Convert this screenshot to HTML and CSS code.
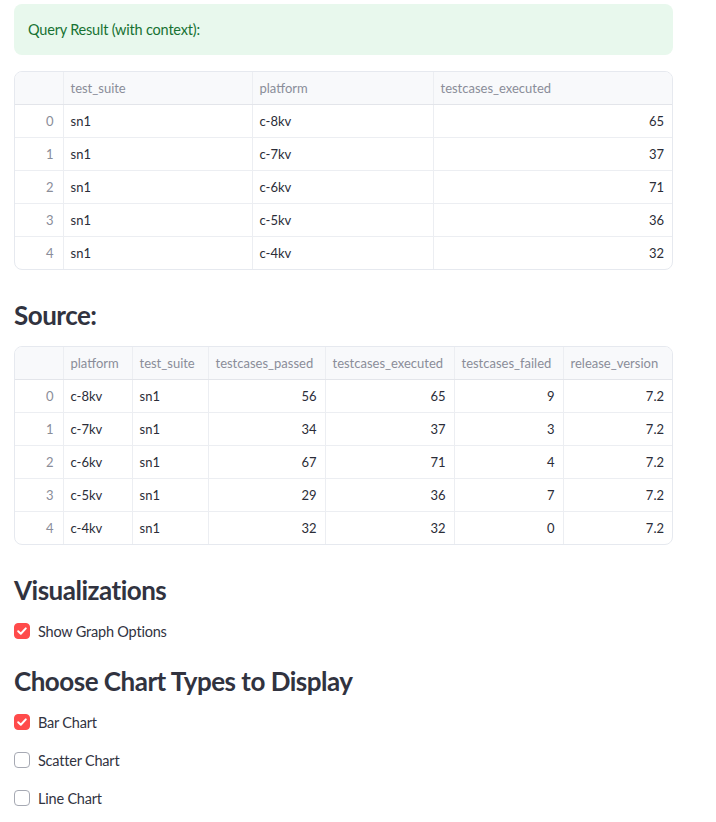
FILE: index.html
```html
<!DOCTYPE html>
<html>
<head>
<meta charset="utf-8">
<link rel="stylesheet" href="styles.css">
</head>
<body>
<main class="page">
  <div class="alert">Query Result (with context):</div>

  <div class="grid-wrap t1">
    <table class="grid">
      <colgroup><col style="width:48px"><col style="width:189px"><col style="width:181px"><col></colgroup>
      <thead><tr><th></th><th>test_suite</th><th>platform</th><th>testcases_executed</th></tr></thead>
      <tbody>
        <tr><td class="idx">0</td><td>sn1</td><td>c-8kv</td><td class="num">65</td></tr>
        <tr><td class="idx">1</td><td>sn1</td><td>c-7kv</td><td class="num">37</td></tr>
        <tr><td class="idx">2</td><td>sn1</td><td>c-6kv</td><td class="num">71</td></tr>
        <tr><td class="idx">3</td><td>sn1</td><td>c-5kv</td><td class="num">36</td></tr>
        <tr><td class="idx">4</td><td>sn1</td><td>c-4kv</td><td class="num">32</td></tr>
      </tbody>
    </table>
  </div>

  <h3 class="heading h-source">Source:</h3>

  <div class="grid-wrap t2">
    <table class="grid">
      <colgroup><col style="width:48px"><col style="width:69px"><col style="width:76px"><col style="width:117px"><col style="width:129px"><col style="width:109px"><col></colgroup>
      <thead><tr><th></th><th>platform</th><th>test_suite</th><th>testcases_passed</th><th>testcases_executed</th><th>testcases_failed</th><th>release_version</th></tr></thead>
      <tbody>
        <tr><td class="idx">0</td><td>c-8kv</td><td>sn1</td><td class="num">56</td><td class="num">65</td><td class="num">9</td><td class="num">7.2</td></tr>
        <tr><td class="idx">1</td><td>c-7kv</td><td>sn1</td><td class="num">34</td><td class="num">37</td><td class="num">3</td><td class="num">7.2</td></tr>
        <tr><td class="idx">2</td><td>c-6kv</td><td>sn1</td><td class="num">67</td><td class="num">71</td><td class="num">4</td><td class="num">7.2</td></tr>
        <tr><td class="idx">3</td><td>c-5kv</td><td>sn1</td><td class="num">29</td><td class="num">36</td><td class="num">7</td><td class="num">7.2</td></tr>
        <tr><td class="idx">4</td><td>c-4kv</td><td>sn1</td><td class="num">32</td><td class="num">32</td><td class="num">0</td><td class="num">7.2</td></tr>
      </tbody>
    </table>
  </div>

  <h3 class="heading h-vis">Visualizations</h3>
  <label class="check c-show"><span class="box on"><svg viewBox="0 0 16 16" width="16" height="16"><path d="M4.2 8.3l2.6 2.5 5-5.4" fill="none" stroke="#fff" stroke-width="2" stroke-linecap="round" stroke-linejoin="round"/></svg></span>Show Graph Options</label>

  <h3 class="heading h-choose">Choose Chart Types to Display</h3>
  <label class="check c-bar"><span class="box on"><svg viewBox="0 0 16 16" width="16" height="16"><path d="M4.2 8.3l2.6 2.5 5-5.4" fill="none" stroke="#fff" stroke-width="2" stroke-linecap="round" stroke-linejoin="round"/></svg></span>Bar Chart</label>
  <label class="check c-next"><span class="box"></span>Scatter Chart</label>
  <label class="check c-next"><span class="box"></span>Line Chart</label>
</main>
</body>
</html>
```

FILE: styles.css
```css
html, body {
  margin: 0;
  padding: 0;
  background: #ffffff;
}
body {
  font-family: "Source Sans Pro", Lato, "Noto Sans", sans-serif;
  color: #31333f;
}
.page {
  width: 659px;
  padding: 4px 0 0 14px;
  display: flex;
  flex-direction: column;
}
.alert {
  height: 51px;
  box-sizing: border-box;
  background: #e8f8ed;
  color: #177233;
  border-radius: 8px;
  padding: 0 14px;
  display: flex;
  align-items: center;
  font-size: 14.5px;
  letter-spacing: -0.2px;
}
.grid-wrap {
  border: 1px solid #e6e9ef;
  border-radius: 8px;
  overflow: hidden;
}
.t1 { margin-top: 16px; }
.grid {
  width: 100%;
  border-collapse: collapse;
  table-layout: fixed;
  font-size: 13px;
}
.grid th, .grid td {
  height: 32px;
  padding: 0 8px 0 7px;
  border-left: 1px solid #eceef2;
  border-top: 1px solid #eceef2;
  white-space: nowrap;
  overflow: hidden;
  text-align: left;
}
.grid th:first-child, .grid td:first-child { border-left: none; }
.grid thead th {
  border-top: none;
  height: 32px;
  background: #f8f9fb;
  color: #8a8d99;
  font-weight: 400;
  border-bottom: 1px solid #e3e5ea;
}
.grid td { color: #2b2d38; }
.grid td.idx { text-align: right; color: #8a8d99; padding-right: 9px; }
.grid td.num { text-align: right; }
.heading {
  margin: 0;
  font-size: 26px;
  font-weight: 700;
  line-height: 34px;
  letter-spacing: -0.5px;
  color: #31333f;
}
.h-source { margin-top: 28px; margin-bottom: 14px; }
.h-vis { margin-top: 28px; }
.h-choose { margin-top: 21px; }
.check {
  display: flex;
  align-items: center;
  gap: 8px;
  font-size: 14.5px;
  letter-spacing: -0.2px;
  height: 24px;
  color: #31333f;
}
.c-show { margin-top: 12px; }
.c-bar { margin-top: 12px; }
.c-next { margin-top: 14px; }
.box {
  width: 16px;
  height: 16px;
  box-sizing: border-box;
  border-radius: 4px;
  border: 1px solid #a6a9b3;
  background: #fff;
  display: inline-flex;
  flex: none;
}
.box.on {
  background: #ff4b4b;
  border-color: #ff4b4b;
}
.box svg { margin: -1px; }
```
